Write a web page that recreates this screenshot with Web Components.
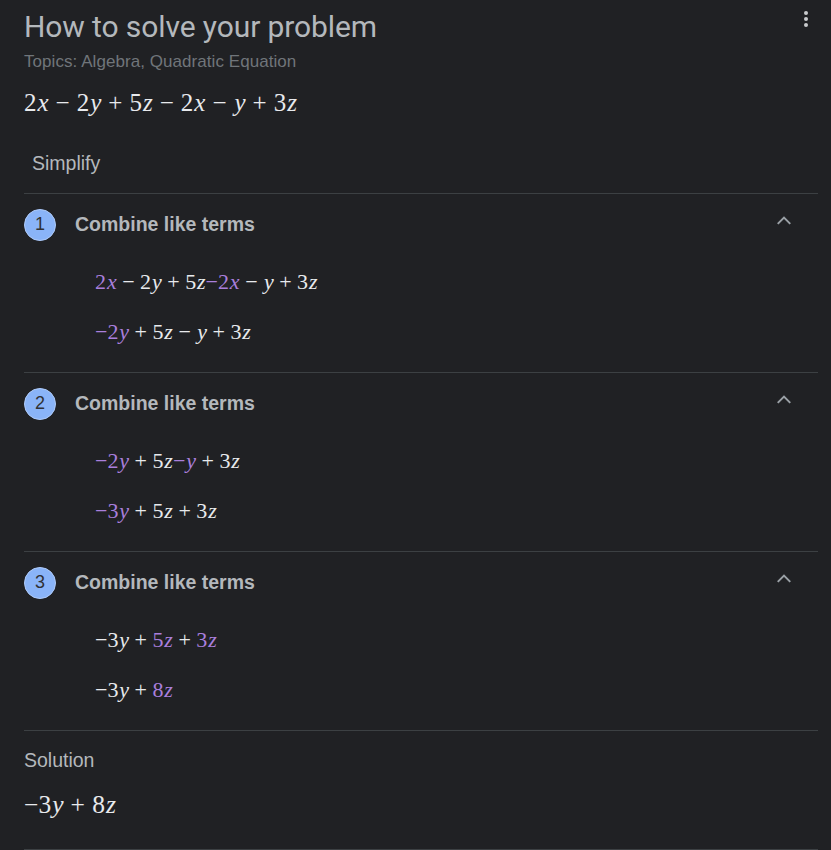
<!DOCTYPE html>
<html>
<head>
<meta charset="utf-8">
<style>
	html, body { margin: 0; padding: 0; background: #202124; height: 850px; overflow: hidden; }
</style>
</head>
<body>
<solver-card>
	<span slot="title">How to solve your problem</span>
	<span slot="topics">Topics: Algebra, Quadratic Equation</span>
	<math-line slot="problem" size="25" expr="2 x - 2 y + 5 z - 2 x - y + 3 z"></math-line>
	<span slot="method">Simplify</span>

	<solver-step num="1" title="Combine like terms">
		<math-line expr="*2 *x - 2 y + 5 z ~*−2 *x - y + 3 z"></math-line>
		<math-line expr="*−2 *y + 5 z - y + 3 z"></math-line>
	</solver-step>
	<solver-step num="2" title="Combine like terms">
		<math-line expr="*−2 *y + 5 z ~*− *y + 3 z"></math-line>
		<math-line expr="*−3 *y + 5 z + 3 z"></math-line>
	</solver-step>
	<solver-step num="3" title="Combine like terms">
		<math-line expr="−3 y + *5 *z + *3 *z"></math-line>
		<math-line expr="−3 y + *8 *z"></math-line>
	</solver-step>

	<span slot="solution-label">Solution</span>
	<math-line slot="solution" size="25.5" expr="−3 y + 8 z"></math-line>
</solver-card>

<script>
(function() {
	// small math renderer: tokens split on spaces, * = purple, ~ = no gap before
	class MathLine extends HTMLElement {
		connectedCallback() {
			let size = Number(this.getAttribute("size") || 22);
			let big = size >= 25;
			let root = this.attachShadow({mode: "open"});
			let html = "";
			this.getAttribute("expr").split(" ").forEach(tok => {
				let cls = [];
				if (tok[0] == "~") { cls.push("tight"); tok = tok.slice(1); }
				if (tok[0] == "*") { cls.push("hi"); tok = tok.slice(1); }
				if (tok == "-" || tok == "+") {
					cls.push("op");
					tok = tok == "-" ? "−" : "+";
				} else if (/[xyz]/.test(tok)) {
					cls.push("var");
				}
				html += `<span class="${cls.join(" ")}">${tok}</span>`;
			});
			root.innerHTML = `
				<style>
				:host {
					display: block;
					font-family: "Liberation Serif", serif;
					font-size: ${size}px;
					line-height: 1;
					color: #e8eaed;
					white-space: nowrap;
				}
				.var { font-style: italic; margin-left: 0.04em; }
				.op { margin: 0 ${big ? 0.28 : 0.25}em; }
				.hi { color: #a97fdc; }
				</style>
				${html}`;
		}
	}

	let stepTemplate = document.createElement("template");
	stepTemplate.innerHTML = `
		<style>
		:host {
			display: block;
			height: 178px;
			border-top: 1px solid #3c4043;
			font-family: "Liberation Sans", sans-serif;
		}
		.head {
			display: flex;
			align-items: center;
			height: 61px;
		}
		.num {
			width: 30px;
			height: 30px;
			border: 1px solid #aecbfa;
			border-radius: 50%;
			background: #8ab4f8;
			color: #303134;
			font-size: 18px;
			display: flex;
			align-items: center;
			justify-content: center;
			flex: none;
		}
		.title {
			margin-left: 19px;
			flex: 1;
			font-size: 19.5px;
			font-weight: bold;
			color: #b4b8bc;
		}
		svg { margin-right: 24px; margin-top: -8px; }
		.body {
			display: flex;
			flex-direction: column;
			gap: 28px;
			padding: 16px 0 0 71px;
		}
		</style>
		<div class="head">
			<div class="num"></div>
			<div class="title"></div>
			<svg width="20" height="20" viewBox="0 0 24 24"><path d="M4.5 15.5 12 8l7.5 7.5" fill="none" stroke="#9aa0a6" stroke-width="2.4"/></svg>
		</div>
		<div class="body"><slot></slot></div>
	`;

	class SolverStep extends HTMLElement {
		constructor() {
			super();
			this._shadowRoot = this.attachShadow({mode: "open"});
			this._shadowRoot.appendChild(stepTemplate.content.cloneNode(true));
		}
		connectedCallback() {
			this._shadowRoot.querySelector(".num").textContent = this.getAttribute("num");
			this._shadowRoot.querySelector(".title").textContent = this.getAttribute("title");
		}
	}

	let cardTemplate = document.createElement("template");
	cardTemplate.innerHTML = `
		<style>
		:host {
			display: block;
			position: relative;
			padding: 0 13px 0 24px;
			background: #202124;
			font-family: "Liberation Sans", sans-serif;
		}
		.title {
			font-family: Roboto, sans-serif;
			font-size: 30px;
			letter-spacing: -0.1px;
			line-height: 36px;
			padding-top: 9px;
			color: #b4b8bc;
		}
		.topics {
			font-size: 17px;
			letter-spacing: 0.06px;
			line-height: 20px;
			margin-top: 7px;
			color: #70757a;
		}
		.problem { margin-top: 18px; }
		.method {
			padding: 36px 0 0 8px;
			height: 78px;
			box-sizing: border-box;
			font-size: 19.5px;
			line-height: 24px;
			color: #b4b8bc;
		}
		.solution-label {
			border-top: 1px solid #3c4043;
			padding-top: 17px;
			font-size: 19.5px;
			line-height: 24px;
			color: #b4b8bc;
		}
		.solution {
			margin-top: 20px;
			height: 57px;
			border-bottom: 1px solid #3c4043;
		}
		.more {
			position: absolute;
			top: 11px;
			right: 23px;
			display: flex;
			flex-direction: column;
			gap: 2px;
		}
		.more i {
			width: 4px;
			height: 4px;
			border-radius: 50%;
			background: #c8cacd;
		}
		</style>
		<div class="more"><i></i><i></i><i></i></div>
		<div class="title"><slot name="title"></slot></div>
		<div class="topics"><slot name="topics"></slot></div>
		<div class="problem"><slot name="problem"></slot></div>
		<div class="method"><slot name="method"></slot></div>
		<slot></slot>
		<div class="solution-label"><slot name="solution-label"></slot></div>
		<div class="solution"><slot name="solution"></slot></div>
	`;

	class SolverCard extends HTMLElement {
		constructor() {
			super();
			this._shadowRoot = this.attachShadow({mode: "open"});
			this._shadowRoot.appendChild(cardTemplate.content.cloneNode(true));
		}
	}

	customElements.define("math-line", MathLine);
	customElements.define("solver-step", SolverStep);
	customElements.define("solver-card", SolverCard);
})();
</script>
</body>
</html>
